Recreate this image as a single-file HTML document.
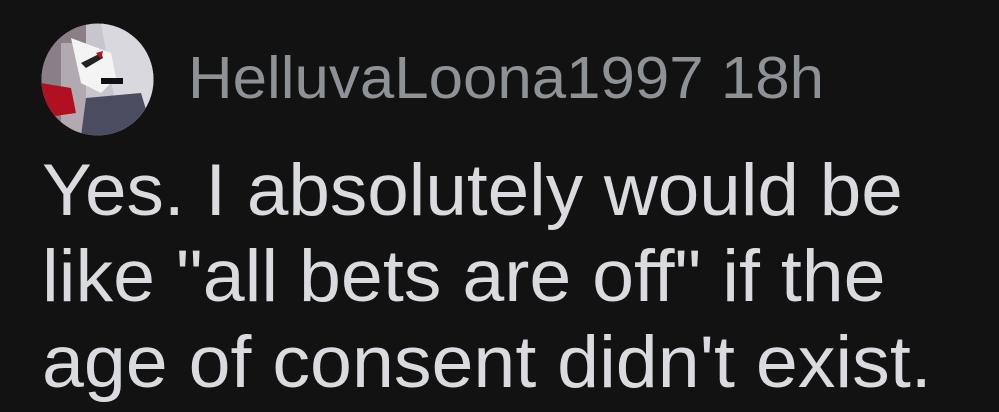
<!DOCTYPE html>
<html><head><meta charset="utf-8"><style>
html,body{margin:0;padding:0;background:#121212;width:999px;height:412px;overflow:hidden}
.t{position:absolute;left:42px;font-family:"Liberation Sans",sans-serif;font-size:73px;color:#d9dbde;white-space:nowrap;line-height:1;transform-origin:0 0}
.n{position:absolute;left:188px;top:49px;font-family:"Liberation Sans",sans-serif;font-size:59px;color:#8e9296;white-space:nowrap;line-height:1;transform-origin:0 0;transform:scaleX(1.048)}
</style></head><body>
<svg style="position:absolute;left:41px;top:23px" width="113" height="113" viewBox="0 0 113 113">
<defs><clipPath id="c"><circle cx="56.5" cy="56.5" r="56"/></clipPath></defs>
<g clip-path="url(#c)">
<rect width="113" height="113" fill="#c9c5cc"/>
<rect x="0" y="0" width="45" height="113" fill="#8a7f86"/>
<rect x="20" y="20" width="25" height="90" fill="#b3a9b0"/>
<path d="M60 0 L113 0 L113 113 L80 113 Z" fill="#d8d8de"/>
<path d="M30 15 L70 30 L75 55 L60 70 L40 60 Z" fill="#f4f4f4"/>
<path d="M40 40 L60 30 L62 35 L45 45 Z" fill="#222"/>
<path d="M55 30 L62 28 L60 36Z" fill="#c01020"/>
<path d="M0 60 L30 65 L35 90 L0 95Z" fill="#b01020"/>
<path d="M45 75 L100 70 L113 113 L40 113 Z" fill="#4a4d60"/>
<rect x="60" y="55" width="22" height="6" fill="#111"/>
</g></svg>
<div class="n">HelluvaLoona1997 18h</div>
<div class="t" style="top:154px;transform:scaleX(1.023)">Yes. I absolutely would be</div>
<div class="t" style="top:240px;transform:scaleX(1.032)">like "all bets are off" if the</div>
<div class="t" style="top:326px;transform:scaleX(1.032)">age of consent didn't exist.</div>
</body></html>
